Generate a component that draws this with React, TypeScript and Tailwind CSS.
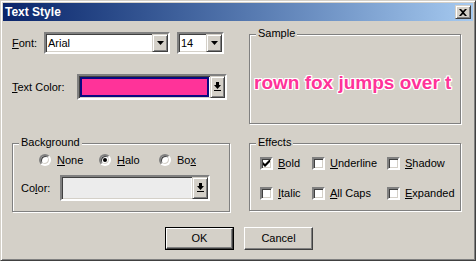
import React from 'react';

// Win2k style bevels
const sunken =
  'border-2 border-t-[#808080] border-l-[#808080] border-b-white border-r-white shadow-[inset_1px_1px_0_#404040,inset_-1px_-1px_0_#d4d0c8]';
const raised =
  'border border-t-[#d4d0c8] border-l-[#d4d0c8] border-b-[#404040] border-r-[#404040] shadow-[inset_1px_1px_0_#fff,inset_-1px_-1px_0_#808080]';
const etched =
  'border border-[#808080] shadow-[inset_1px_1px_0_#fff,1px_1px_0_#fff]';

function DownTriangle() {
  return (
    <svg width="7" height="4" viewBox="0 0 7 4">
      <path d="M0 0h7L3.5 4z" fill="#000" />
    </svg>
  );
}

function DownToLine() {
  return (
    <svg width="7" height="10" viewBox="0 0 7 10">
      <rect x="2" y="0" width="3" height="3" fill="#000" />
      <path d="M0 3h7L3.5 7z" fill="#000" />
      <rect x="0" y="8" width="7" height="1" fill="#000" />
    </svg>
  );
}

function Combo({ value, width }: { value: string; width: string }) {
  return (
    <div className={`${width} h-[22px] bg-white ${sunken} flex items-stretch`}>
      <span className="flex-1 pl-[2px] leading-[18px] text-[11px] text-black">{value}</span>
      <div className={`w-[16px] bg-[#d4d0c8] ${raised} flex items-center justify-center`}>
        <DownTriangle />
      </div>
    </div>
  );
}

function Radio({ checked, children }: { checked?: boolean; children: React.ReactNode }) {
  return (
    <div className="w-[60px] h-[12px] flex items-center gap-[6px]">
      <div className="w-[12px] h-[12px] rounded-full bg-white border-2 border-t-[#808080] border-l-[#808080] border-b-white border-r-white shadow-[inset_1px_1px_0_#404040,inset_-1px_-1px_0_#d4d0c8] flex items-center justify-center">
        {checked && <div className="w-[4px] h-[4px] rounded-full bg-black" />}
      </div>
      <span className="leading-[13px]">{children}</span>
    </div>
  );
}

function Check({ checked, width, children }: { checked?: boolean; width: string; children: React.ReactNode }) {
  return (
    <div className={`${width} h-[13px] flex items-center gap-[5px]`}>
      <div className={`w-[13px] h-[13px] bg-white ${sunken} flex items-center justify-center`}>
        {checked && (
          <svg width="7" height="7" viewBox="0 0 7 7">
            <path d="M0 2v3l2 2l5-5V-1L2 4z" fill="#000" />
          </svg>
        )}
      </div>
      <span className="leading-[13px]">{children}</span>
    </div>
  );
}

function Group({ label, className, children }: { label: string; className: string; children: React.ReactNode }) {
  return (
    <div className={`relative ${etched} ${className}`}>
      <span className="absolute left-[6px] top-[-8px] px-[2px] bg-[#d4d0c8] leading-[13px]">{label}</span>
      {children}
    </div>
  );
}

export default function App() {
  return (
    <div className="w-[476px] h-[261px] bg-[#d4d0c8] border border-t-[#d4d0c8] border-l-[#d4d0c8] border-r-[#404040] border-b-[#404040] shadow-[inset_1px_1px_0_#fff,inset_-1px_-1px_0_#808080] p-[2px] flex flex-col font-['Liberation_Sans',Arial,sans-serif] text-[11px] text-black">
      {/* Title bar */}
      <div className="h-[18px] bg-gradient-to-r from-[#0a246a] to-[#a6caf0] flex items-center justify-between pl-[2px] pr-[2px]">
        <span className="text-white font-bold text-[12px] leading-[14px]">Text Style</span>
        <div className={`w-[16px] h-[14px] bg-[#d4d0c8] ${raised} flex items-center justify-center`}>
          <svg width="8" height="7" viewBox="0 0 8 7">
            <path d="M0 0h2l2 2l2-2h2L5 3.5L8 7H6L4 5L2 7H0l3-3.5z" fill="#000" />
          </svg>
        </div>
      </div>

      {/* Body */}
      <div className="flex pl-[9px] pt-[11px] gap-[19px]">
        {/* Left column */}
        <div className="w-[218px] flex flex-col">
          <div className="h-[22px] flex items-center">
            <span className="w-[32px]"><u>F</u>ont:</span>
            <Combo value="Arial" width="w-[126px]" />
            <div className="w-[7px]" />
            <Combo value="14" width="w-[47px]" />
          </div>

          <div className="mt-[20px] h-[26px] flex items-center">
            <span className="w-[65px]"><u>T</u>ext Color:</span>
            <div className={`w-[150px] h-[26px] bg-white ${sunken} flex items-stretch`}>
              <div className="flex-1 p-[1px]">
                <div className="h-full border-2 border-[#0a0a80] bg-[#ff3399]" />
              </div>
              <div className={`w-[15px] bg-[#d4d0c8] ${raised} flex items-center justify-center`}>
                <DownToLine />
              </div>
            </div>
          </div>

          <Group label="Background" className="mt-[43px] h-[69px]">
            <div className="pt-[10px] pl-[26px] flex">
              <Radio><u>N</u>one</Radio>
              <Radio checked><u>H</u>alo</Radio>
              <Radio>Bo<u>x</u></Radio>
            </div>
            <div className="mt-[9px] pl-[8px] flex items-center h-[26px]">
              <span className="w-[39px]">Co<u>l</u>or:</span>
              <div className={`w-[150px] h-[26px] bg-white ${sunken} flex items-stretch`}>
                <div className="flex-1 p-[1px]">
                  <div className="h-full bg-[#ececec]" />
                </div>
                <div className={`w-[16px] bg-[#d4d0c8] ${raised} flex items-center justify-center`}>
                  <DownToLine />
                </div>
              </div>
            </div>
          </Group>
        </div>

        {/* Right column */}
        <div className="w-[212px] flex flex-col pt-[2px]">
          <Group label="Sample" className="h-[90px]">
            <div className="h-full overflow-hidden pl-[4px] pr-[4px] pt-[8px] flex items-center whitespace-nowrap">
              <span className="text-[19px] font-bold text-[#ff3399] [text-shadow:1px_0_#fff,-1px_0_#fff,0_1px_#fff,0_-1px_#fff,1px_1px_#fff,-1px_-1px_#fff,1px_-1px_#fff,-1px_1px_#fff]">
                rown fox jumps over t
              </span>
            </div>
          </Group>

          <Group label="Effects" className="mt-[19px] h-[68px]">
            <div className="pt-[13px] pl-[10px] flex">
              <Check checked width="w-[52px]"><u>B</u>old</Check>
              <Check width="w-[75px]"><u>U</u>nderline</Check>
              <Check width="w-[70px]"><u>S</u>hadow</Check>
            </div>
            <div className="mt-[17px] pl-[10px] flex">
              <Check width="w-[52px]"><u>I</u>talic</Check>
              <Check width="w-[75px]"><u>A</u>ll Caps</Check>
              <Check width="w-[70px]"><u>E</u>xpanded</Check>
            </div>
          </Group>
        </div>
      </div>

      {/* Buttons */}
      <div className="mt-[15px] flex justify-center gap-[10px] pl-[2px]">
        <div className="w-[69px] h-[23px] border border-black">
          <div className="h-full border border-t-white border-l-white border-b-[#404040] border-r-[#404040] shadow-[inset_-1px_-1px_0_#808080] flex items-center justify-center">
            OK
          </div>
        </div>
        <div className="w-[69px] h-[23px] border border-t-white border-l-white border-b-[#404040] border-r-[#404040] shadow-[inset_-1px_-1px_0_#808080] flex items-center justify-center">
          Cancel
        </div>
      </div>
    </div>
  );
}
